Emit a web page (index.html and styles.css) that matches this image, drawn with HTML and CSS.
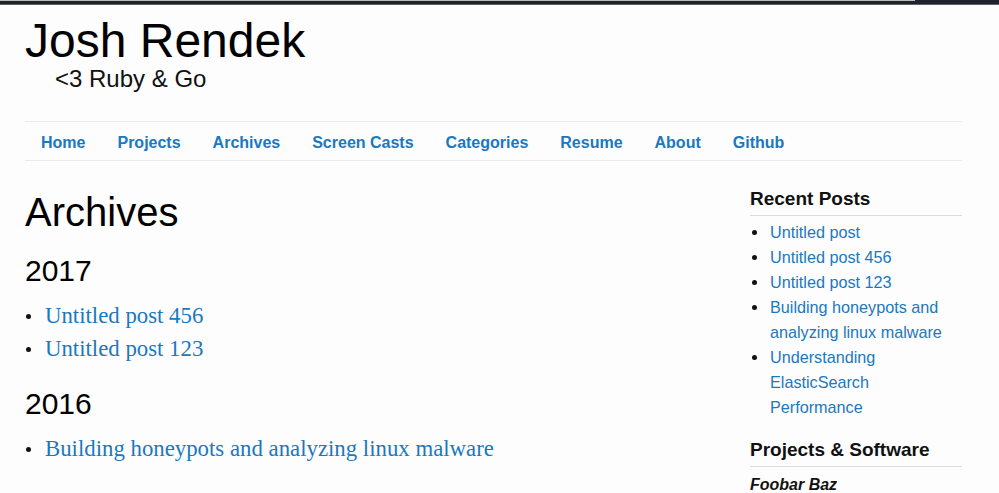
FILE: index.html
```html
<!DOCTYPE html>
<html lang="en">
<head>
<meta charset="utf-8">
<title>Archives - Josh Rendek</title>
<link rel="stylesheet" href="styles.css">
</head>
<body>
<div class="topbar"><div class="topbar-line"></div></div>
<div class="page">
  <header class="site-header">
    <h1 class="site-title">Josh Rendek</h1>
    <p class="site-sub">&lt;3 Ruby &amp; Go</p>
  </header>
  <nav class="nav">
    <a href="#">Home</a>
    <a href="#">Projects</a>
    <a href="#">Archives</a>
    <a href="#">Screen Casts</a>
    <a href="#">Categories</a>
    <a href="#">Resume</a>
    <a href="#">About</a>
    <a href="#">Github</a>
  </nav>
  <div class="layout">
    <main class="main">
      <h1 class="page-title">Archives</h1>
      <h2 class="year">2017</h2>
      <ul class="posts">
        <li><a href="#">Untitled post 456</a></li>
        <li><a href="#">Untitled post 123</a></li>
      </ul>
      <h2 class="year">2016</h2>
      <ul class="posts">
        <li><a href="#">Building honeypots and analyzing linux malware</a></li>
      </ul>
    </main>
    <aside class="sidebar">
      <h3 class="side-title">Recent Posts</h3>
      <ul class="side-list">
        <li><a href="#">Untitled post</a></li>
        <li><a href="#">Untitled post 456</a></li>
        <li><a href="#">Untitled post 123</a></li>
        <li><a href="#">Building honeypots and analyzing linux malware</a></li>
        <li><a href="#">Understanding ElasticSearch Performance</a></li>
      </ul>
      <h3 class="side-title side-title-2">Projects &amp; Software</h3>
      <p class="project">Foobar Baz</p>
    </aside>
  </div>
</div>
</body>
</html>
```
FILE: styles.css
```css
html, body {
  margin: 0;
  padding: 0;
  background: #fdfdfd;
}
body {
  font-family: "Liberation Sans", Arial, sans-serif;
  color: #111;
}
a {
  color: #1a78c0;
  text-decoration: none;
}
.topbar {
  height: 4px;
  background: #1e222c;
  border-bottom: 1px solid #5d6169;
}
.topbar-line {
  width: 915px;
  height: 1px;
  background: #b9bbbf;
}
.page {
  width: 937px;
  margin-left: 25px;
}
.site-header {
  padding-top: 8px;
}
.site-title {
  margin: 0;
  font-size: 48px;
  line-height: 55px;
  font-weight: normal;
  color: #000;
}
.site-sub {
  margin: -1px 0 0;
  padding-left: 30px;
  font-size: 24px;
  line-height: 24px;
  color: #111;
}
.nav {
  margin-top: 30px;
  border-top: 1px solid #ebebeb;
  border-bottom: 1px solid #ebebeb;
  display: flex;
  padding-top: 3px;
  line-height: 35px;
}
.nav a {
  padding: 0 16px;
  font-size: 16px;
  font-weight: bold;
}
.layout {
  display: grid;
  grid-template-columns: 1fr 212px;
  column-gap: 30px;
}
.page-title {
  margin: 27px 0 17px;
  font-size: 40px;
  line-height: 48px;
  font-weight: normal;
  color: #000;
}
.year {
  margin: 0 0 10px;
  font-size: 30px;
  line-height: 36px;
  font-weight: normal;
  color: #000;
}
.posts {
  list-style: none;
  margin: 0 0 21px;
  padding: 0;
}
.posts li {
  display: flex;
  align-items: baseline;
  font-family: "Liberation Serif", Georgia, serif;
  font-size: 22.8px;
  line-height: 33px;
}
.posts li::before {
  content: "";
  flex: 0 0 auto;
  width: 5px;
  height: 5px;
  border-radius: 50%;
  background: #111;
  margin: 0 14px 0 1px;
  align-self: center;
  position: relative;
  top: 1px;
}
.side-title {
  margin: 26px 0 0;
  padding-bottom: 5px;
  border-bottom: 1px solid #dcdcdc;
  font-size: 19px;
  line-height: 23px;
  font-weight: bold;
  color: #111;
}
.side-title-2 {
  margin-top: 18px;
}
.side-list {
  list-style: none;
  margin: 4px 0 0;
  padding: 0;
}
.side-list li {
  display: flex;
  font-size: 16.2px;
  line-height: 25px;
}
.side-list li::before {
  content: "";
  flex: 0 0 auto;
  width: 5px;
  height: 5px;
  border-radius: 50%;
  background: #111;
  margin: 10px 13px 0 2px;
}
.project {
  margin: 6px 0 0;
  font-size: 16px;
  line-height: 24px;
  font-weight: bold;
  font-style: italic;
  color: #111;
}
```
